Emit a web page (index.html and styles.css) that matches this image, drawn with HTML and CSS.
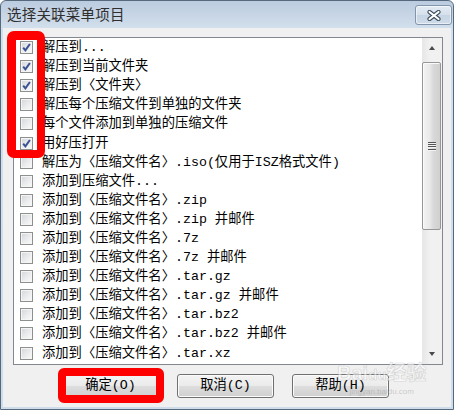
FILE: index.html
```html
<!DOCTYPE html>
<html lang="zh-CN">
<head>
<meta charset="utf-8">
<title>选择关联菜单项目</title>
<link rel="stylesheet" href="styles.css">
</head>
<body>
<div class="window">
  <div class="titlebar">
    <span class="title">选择关联菜单项目</span>
    <button class="close" aria-label="关闭">
      <svg width="14" height="11" viewBox="0 0 14 11">
        <path d="M2.5 2 L11.5 9 M11.5 2 L2.5 9" stroke="#3b4b5c" stroke-width="4.2" stroke-linecap="round" fill="none"/>
        <path d="M2.5 2 L11.5 9 M11.5 2 L2.5 9" stroke="#ffffff" stroke-width="2.2" stroke-linecap="round" fill="none"/>
      </svg>
    </button>
  </div>
  <div class="client">
    <div class="listbox">
      <ul class="items">
        <li class="item"><span class="cb checked"><svg viewBox="0 0 11 11"><path d="M2.2 5.6 L4.4 8.4 L8.9 2"/></svg></span><span class="label">解压到...</span></li>
        <li class="item"><span class="cb checked"><svg viewBox="0 0 11 11"><path d="M2.2 5.6 L4.4 8.4 L8.9 2"/></svg></span><span class="label">解压到当前文件夹</span></li>
        <li class="item"><span class="cb checked"><svg viewBox="0 0 11 11"><path d="M2.2 5.6 L4.4 8.4 L8.9 2"/></svg></span><span class="label">解压到〈文件夹〉</span></li>
        <li class="item"><span class="cb"></span><span class="label">解压每个压缩文件到单独的文件夹</span></li>
        <li class="item"><span class="cb"></span><span class="label">每个文件添加到单独的压缩文件</span></li>
        <li class="item"><span class="cb checked"><svg viewBox="0 0 11 11"><path d="M2.2 5.6 L4.4 8.4 L8.9 2"/></svg></span><span class="label">用好压打开</span></li>
        <li class="item"><span class="cb"></span><span class="label">解压为〈压缩文件名〉.iso(仅用于ISZ格式文件)</span></li>
        <li class="item"><span class="cb"></span><span class="label">添加到压缩文件...</span></li>
        <li class="item"><span class="cb"></span><span class="label">添加到〈压缩文件名〉.zip</span></li>
        <li class="item"><span class="cb"></span><span class="label">添加到〈压缩文件名〉.zip 并邮件</span></li>
        <li class="item"><span class="cb"></span><span class="label">添加到〈压缩文件名〉.7z</span></li>
        <li class="item"><span class="cb"></span><span class="label">添加到〈压缩文件名〉.7z 并邮件</span></li>
        <li class="item"><span class="cb"></span><span class="label">添加到〈压缩文件名〉.tar.gz</span></li>
        <li class="item"><span class="cb"></span><span class="label">添加到〈压缩文件名〉.tar.gz 并邮件</span></li>
        <li class="item"><span class="cb"></span><span class="label">添加到〈压缩文件名〉.tar.bz2</span></li>
        <li class="item"><span class="cb"></span><span class="label">添加到〈压缩文件名〉.tar.bz2 并邮件</span></li>
        <li class="item"><span class="cb"></span><span class="label">添加到〈压缩文件名〉.tar.xz</span></li>
      </ul>
      <div class="scrollbar">
        <div class="sb-btn"><span class="arrow-up"></span></div>
        <div class="track"><div class="thumb"><span class="grip"></span></div></div>
        <div class="sb-btn"><span class="arrow-down"></span></div>
      </div>
    </div>
    <div class="buttons">
      <button class="btn">确定(O)</button>
      <button class="btn">取消(C)</button>
      <button class="btn">帮助(H)</button>
    </div>
  </div>
  <div class="mark mark-list"></div>
  <div class="mark mark-ok"></div>
  <div class="watermark">
    <span class="wm-logo">Bai<span class="wm-du">du</span>经验</span>
    <span class="wm-url">jingyan.baidu.com</span>
  </div>
</div>
</body>
</html>
```
FILE: styles.css
```css
html, body {
  margin: 0;
  padding: 0;
  background: #ffffff;
}

body {
  width: 456px;
  height: 412px;
  overflow: hidden;
  font-family: "Liberation Mono", "Noto Sans CJK SC", monospace;
}

.window {
  position: relative;
  width: 454px;
  height: 410px;
  box-sizing: border-box;
  border: 1px solid #56697c;
  border-radius: 6px 6px 0 0;
  background: linear-gradient(#bccce0 0, #c7d5e5 14px, #d2dfec 27px, #cfdcea 100%);
  padding: 0 2px 2px;
  display: flex;
  flex-direction: column;
}

.titlebar {
  height: 27px;
  flex: none;
  display: flex;
  align-items: center;
  justify-content: space-between;
  padding-left: 4px;
}

.title {
  font-family: "Noto Sans CJK SC", sans-serif;
  font-size: 14.5px;
  color: #2f2f2f;
  line-height: 1;
  letter-spacing: 0.2px;
}

.close {
  align-self: flex-start;
  margin: 4px -1px 0 0;
  width: 37px;
  height: 20px;
  padding: 0;
  box-sizing: border-box;
  border: 1px solid #8395ab;
  border-radius: 3px;
  background: linear-gradient(#e3ebf4 0%, #d5e0ec 50%, #c6d4e3 51%, #cfdcea 100%);
  box-shadow: inset 0 0 0 1px rgba(255, 255, 255, 0.55);
  display: flex;
  align-items: center;
  justify-content: center;
}

.client {
  flex: 1;
  background: #f0f0f0;
  display: flex;
  flex-direction: column;
}

.listbox {
  margin: 9px 0 0 10px;
  width: 430px;
  height: 328px;
  box-sizing: border-box;
  border: 1px solid #828790;
  background: #ffffff;
  display: flex;
}

.items {
  flex: 1;
  list-style: none;
  margin: 0;
  padding: 0;
  overflow: hidden;
}

.item {
  height: 19.1px;
  display: flex;
  align-items: center;
  padding-left: 6px;
  white-space: nowrap;
}

.cb {
  flex: none;
  width: 13px;
  height: 13px;
  box-sizing: border-box;
  border: 1px solid #8e8f8f;
  background: linear-gradient(135deg, #d3d5d9 0%, #e9eaec 50%, #fbfbfb 100%);
  box-shadow: inset 0 0 0 1px #f5f5f5;
  display: flex;
  align-items: center;
  justify-content: center;
}

.cb svg {
  width: 11px;
  height: 11px;
}

.cb svg path {
  fill: none;
  stroke: #3a5293;
  stroke-width: 2;
  stroke-linejoin: miter;
}

.label {
  margin-left: 9px;
  font-size: 13.3px;
  line-height: 19px;
  color: #000000;
}

.scrollbar {
  flex: none;
  width: 20px;
  display: flex;
  flex-direction: column;
  background: linear-gradient(to right, #e6e6e6, #f1f1f1 40%, #f1f1f1);
}

.sb-btn {
  height: 20px;
  flex: none;
  display: flex;
  align-items: center;
  justify-content: center;
}

.arrow-up {
  width: 0;
  height: 0;
  border-left: 3.5px solid transparent;
  border-right: 3.5px solid transparent;
  border-bottom: 4px solid #4a4a4a;
}

.arrow-down {
  width: 0;
  height: 0;
  border-left: 3.5px solid transparent;
  border-right: 3.5px solid transparent;
  border-top: 4px solid #4a4a4a;
}

.track {
  flex: 1;
  padding-top: 4px;
}

.thumb {
  width: 19px;
  height: 168px;
  box-sizing: border-box;
  border: 1px solid #979797;
  border-radius: 2px;
  background: linear-gradient(to right, #f4f4f4 0%, #e9e9e9 40%, #d9d9d9 60%, #d0d0d0 100%);
  box-shadow: inset 1px 1px 0 #fbfbfb;
  display: flex;
  align-items: center;
  justify-content: center;
}

.grip {
  width: 8px;
  height: 9px;
  background: repeating-linear-gradient(#555555 0, #555555 1px, #f2f2f2 1px, #f2f2f2 2px, transparent 2px, transparent 2.25px);
}

.buttons {
  display: flex;
  gap: 18px;
  margin-top: 9px;
  padding-left: 59px;
}

.btn {
  width: 97px;
  height: 24px;
  box-sizing: border-box;
  border: 1px solid #707070;
  border-radius: 3px;
  background: linear-gradient(#f3f3f3 0%, #ebebeb 48%, #dddddd 52%, #cfcfcf 100%);
  box-shadow: inset 0 0 0 1px #fbfbfb;
  font-family: "Liberation Mono", "Noto Sans CJK SC", monospace;
  font-size: 13.3px;
  color: #000000;
  padding: 0;
  line-height: 20px;
}

.mark {
  position: absolute;
  box-sizing: border-box;
  border-style: solid;
  border-color: #ff0000;
  pointer-events: none;
}

.mark-list {
  left: 6px;
  top: 30px;
  width: 38px;
  height: 127px;
  border-width: 9px 8px 8px 9px;
  border-radius: 7px;
}

.mark-ok {
  left: 57px;
  top: 367px;
  width: 106px;
  height: 35px;
  border-width: 8px;
  border-radius: 6px;
}

.watermark {
  position: absolute;
  left: 336px;
  top: 360px;
  display: flex;
  flex-direction: column;
  align-items: center;
  pointer-events: none;
}

.wm-logo {
  font-family: "Liberation Sans", "Noto Sans CJK SC", sans-serif;
  font-weight: bold;
  font-size: 20px;
  line-height: 24px;
  color: rgba(255, 255, 255, 0.55);
  -webkit-text-stroke: 0.7px rgba(150, 150, 150, 0.35);
}

.wm-du {
  font-size: 15px;
}

.wm-url {
  font-family: "Liberation Sans", sans-serif;
  font-size: 8px;
  line-height: 10px;
  color: rgba(150, 150, 150, 0.45);
}
```
